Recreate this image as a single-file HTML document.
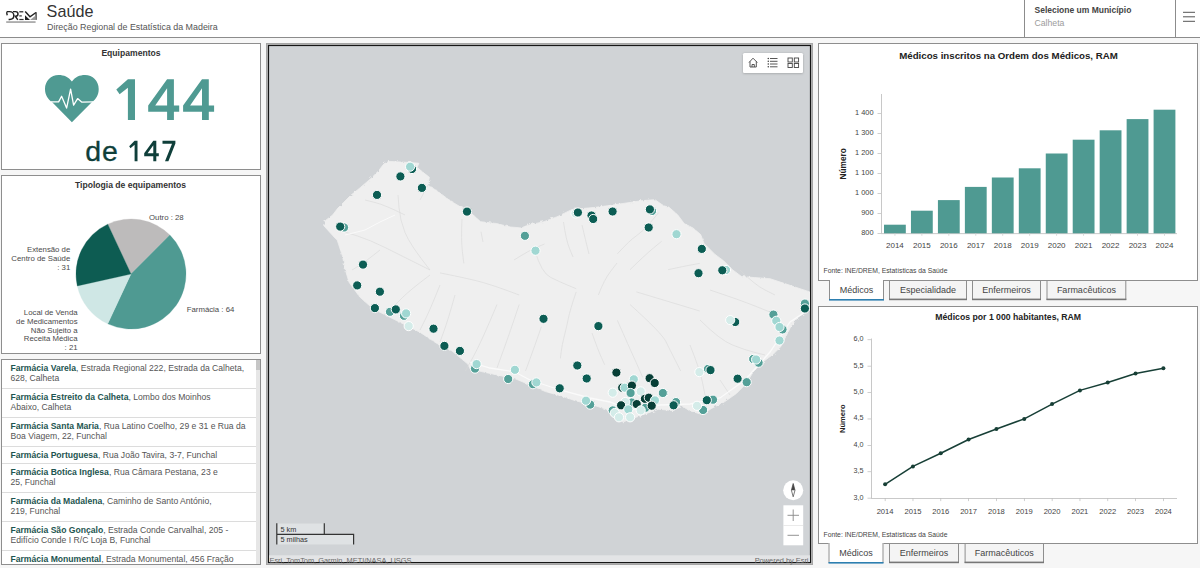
<!DOCTYPE html>
<html><head><meta charset="utf-8">
<style>
*{margin:0;padding:0;box-sizing:border-box}
html,body{width:1200px;height:568px;overflow:hidden;background:#f6f6f6;font-family:"Liberation Sans",sans-serif}
.a{position:absolute}
svg{position:absolute;left:0;top:0}
text{font-family:"Liberation Sans",sans-serif}
</style></head><body>
<svg width="1200" height="568" viewBox="0 0 1200 568">

<rect x="0" y="0" width="1200" height="37" fill="#fff"/>
<rect x="0" y="37" width="1200" height="1" fill="#8c8c8c"/>
<rect x="0" y="38" width="1200" height="5" fill="#f7f7f7"/>
<g fill="none" stroke="#222" stroke-width="1.45"><path d="M6.6,11.6 H9.6 C12,11.6 13.8,13.4 13.8,15.6 C13.8,17.9 12,19.5 9.6,19.5 H8.6"/><path d="M6.9,12.2 C6.6,13.6 6.9,14.7 7.4,15.3"/><path d="M12.9,11.6 H15.6 C17.2,11.6 18,12.6 18,13.9 C18,15.1 17.1,16.1 15.6,16.1 H15.3 L17.8,19.8"/><path d="M25.2,11.6 L30,16.8 L36,12.5"/></g><rect x="19.3" y="11.2" width="4" height="1.2" fill="#222"/><rect x="19.3" y="15.3" width="2.5" height="1.2" fill="#333"/><rect x="19.3" y="18.9" width="4.3" height="1.2" fill="#333"/><rect x="35.4" y="12.2" width="1.3" height="7.7" fill="#333"/><path d="M25,15.3 L25,19.9 L30,19.9 Z" fill="#222"/><path d="M30,19.9 L35.4,15.8 L35.4,19.9 Z" fill="#999"/><rect x="6.2" y="21.4" width="29.4" height="1.3" fill="#8a8a8a"/>
<text x="46.6" y="16.7" font-size="16.2" fill="#333">Saúde</text>
<text x="47" y="29.5" font-size="8.9" fill="#555">Direção Regional de Estatística da Madeira</text>
<rect x="1024" y="0" width="1" height="37" fill="#8c8c8c"/>
<rect x="1175" y="0" width="1" height="37" fill="#8c8c8c"/>
<text x="1034.5" y="12.8" font-size="8.5" font-weight="bold" fill="#444">Selecione um Município</text>
<text x="1034.5" y="26" font-size="8.7" fill="#9c9c9c">Calheta</text>
<rect x="1183" y="11.8" width="12" height="1" fill="#555"/>
<rect x="1183" y="16.3" width="12" height="1" fill="#555"/>
<rect x="1183" y="20.8" width="12" height="1" fill="#555"/>
<rect x="1.5" y="43.5" width="259" height="126" fill="#fff" stroke="#8e8e8e" stroke-width="1"/>
<rect x="1.5" y="175.5" width="259" height="178" fill="#fff" stroke="#8e8e8e" stroke-width="1"/>
<rect x="1.5" y="359.5" width="259" height="205" fill="#fff" stroke="#8e8e8e" stroke-width="1"/>
<text x="131" y="55.9" font-size="8.6" font-weight="bold" fill="#333" text-anchor="middle">Equipamentos</text>
<path d="M71.9,81.5 C68.5,77 64,75 58.6,75 C51,75 45,81 45,89 C45,95 48,99.5 52,102 L71.9,122.2 L92,102 C96,99.5 98.7,95 98.7,89 C98.7,81 92.7,75 85,75 C79.5,75 75.3,77 71.9,81.5 Z" fill="#4f9a92"/>
<polyline points="51,101.9 58.6,101.9 61.6,96.3 66.6,108.1 70.6,89.1 73.6,105.1 77.6,98.6 81.6,102.1 93,101.9" fill="none" stroke="#fff" stroke-width="1.3" stroke-linejoin="round"/>
<path fill-rule="evenodd" fill="#4f9a92" d="M127.9,79.3 L135,79.3 L135,119.9 L127.9,119.9 L127.9,87.8 L119.6,94.2 L116.3,89.4 Z M167.1,79.3 L173.9,79.3 L173.9,105.4 L179.2,105.4 L179.2,111.7 L173.9,111.7 L173.9,119.9 L167.1,119.9 L167.1,111.7 L148.2,111.7 L148.2,105.4 Z M167.1,88.2 L167.1,105.4 L155.2,105.4 Z M202.0,79.3 L208.8,79.3 L208.8,105.4 L214.1,105.4 L214.1,111.7 L208.8,111.7 L208.8,119.9 L202.0,119.9 L202.0,111.7 L183.1,111.7 L183.1,105.4 Z M202.0,88.2 L202.0,105.4 L190.1,105.4 Z"/>
<text x="85.2" y="161.2" font-size="28.5" letter-spacing="1" fill="#0f3f3a" stroke="#0f3f3a" stroke-width="0.3">de</text>
<path fill-rule="evenodd" fill="#0f3f3a" d="M134.6,140.8 L137.5,140.8 L137.5,161.2 L134.6,161.2 L134.6,144.8 L130.5,148.3 L129.2,146.2 Z M153.3,140.8 L156.3,140.8 L156.3,153.3 L158.8,153.3 L158.8,156.2 L156.3,156.2 L156.3,161.2 L153.3,161.2 L153.3,156.2 L144.2,156.2 L144.2,153.3 Z M153.3,145.3 L153.3,153.3 L147.6,153.3 Z M162.5,140.8 L175.4,140.8 L175.4,143.6 L168.4,161.2 L165,161.2 L172,143.7 L162.5,143.7 Z"/>
<text x="130.5" y="188" font-size="8.6" font-weight="bold" fill="#333" text-anchor="middle">Tipologia de equipamentos</text>
<path d="M131,274 L107.76,224.15 A55,55 0 0 1 169.89,235.11 Z" fill="#bdbbbb" stroke="#bdbbbb" stroke-width="0.3"/>
<path d="M131,274 L169.89,235.11 A55,55 0 0 1 107.76,323.85 Z" fill="#4f9a92" stroke="#4f9a92" stroke-width="0.3"/>
<path d="M131,274 L107.76,323.85 A55,55 0 0 1 77.30,285.90 Z" fill="#cfe7e5" stroke="#cfe7e5" stroke-width="0.3"/>
<path d="M131,274 L77.30,285.90 A55,55 0 0 1 107.76,224.15 Z" fill="#0d5c52" stroke="#0d5c52" stroke-width="0.3"/>
<text x="149" y="219.5" font-size="7.8" fill="#4a4a4a" text-anchor="start">Outro : 28</text>
<text x="70.3" y="252" font-size="7.8" fill="#4a4a4a" text-anchor="end">Extensão de</text>
<text x="70.3" y="261" font-size="7.8" fill="#4a4a4a" text-anchor="end">Centro de Saúde</text>
<text x="70.3" y="270" font-size="7.8" fill="#4a4a4a" text-anchor="end">: 31</text>
<text x="77.6" y="315" font-size="7.8" fill="#4a4a4a" text-anchor="end">Local de Venda</text>
<text x="77.6" y="323.8" font-size="7.8" fill="#4a4a4a" text-anchor="end">de Medicamentos</text>
<text x="77.6" y="332.6" font-size="7.8" fill="#4a4a4a" text-anchor="end">Não Sujeito a</text>
<text x="77.6" y="341.4" font-size="7.8" fill="#4a4a4a" text-anchor="end">Receita Médica</text>
<text x="77.6" y="350.2" font-size="7.8" fill="#4a4a4a" text-anchor="end">: 21</text>
<text x="186.7" y="311.5" font-size="7.8" fill="#4a4a4a" text-anchor="start">Farmácia : 64</text>
<rect x="256" y="360" width="4" height="204" fill="#e6e6e6"/>
<rect x="256" y="360" width="4" height="10" fill="#c6c6c6"/>
<text x="10.5" y="370.8" font-size="8.6" fill="#555"><tspan font-weight="bold" fill="#1d5550">Farmácia Varela</tspan>, Estrada Regional 222, Estrada da Calheta,</text>
<text x="10.5" y="381.40000000000003" font-size="8.6" fill="#555">628, Calheta</text>
<rect x="2" y="388" width="254" height="1" fill="#dcdcdc"/>
<text x="10.5" y="399.8" font-size="8.6" fill="#555"><tspan font-weight="bold" fill="#1d5550">Farmácia Estreito da Calheta</tspan>, Lombo dos Moinhos</text>
<text x="10.5" y="410.40000000000003" font-size="8.6" fill="#555">Abaixo, Calheta</text>
<rect x="2" y="417" width="254" height="1" fill="#dcdcdc"/>
<text x="10.5" y="428.8" font-size="8.6" fill="#555"><tspan font-weight="bold" fill="#1d5550">Farmácia Santa Maria</tspan>, Rua Latino Coelho, 29 e 31 e Rua da</text>
<text x="10.5" y="439.40000000000003" font-size="8.6" fill="#555">Boa Viagem, 22, Funchal</text>
<rect x="2" y="446" width="254" height="1" fill="#dcdcdc"/>
<text x="10.5" y="457.8" font-size="8.6" fill="#555"><tspan font-weight="bold" fill="#1d5550">Farmácia Portuguesa</tspan>, Rua João Tavira, 3-7, Funchal</text>
<rect x="2" y="463" width="254" height="1" fill="#dcdcdc"/>
<text x="10.5" y="474.8" font-size="8.6" fill="#555"><tspan font-weight="bold" fill="#1d5550">Farmácia Botica Inglesa</tspan>, Rua Câmara Pestana, 23 e</text>
<text x="10.5" y="485.40000000000003" font-size="8.6" fill="#555">25, Funchal</text>
<rect x="2" y="492" width="254" height="1" fill="#dcdcdc"/>
<text x="10.5" y="503.8" font-size="8.6" fill="#555"><tspan font-weight="bold" fill="#1d5550">Farmácia da Madalena</tspan>, Caminho de Santo António,</text>
<text x="10.5" y="514.4" font-size="8.6" fill="#555">219, Funchal</text>
<rect x="2" y="521" width="254" height="1" fill="#dcdcdc"/>
<text x="10.5" y="532.8" font-size="8.6" fill="#555"><tspan font-weight="bold" fill="#1d5550">Farmácia São Gonçalo</tspan>, Estrada Conde Carvalhal, 205 -</text>
<text x="10.5" y="543.4" font-size="8.6" fill="#555">Edifício Conde I R/C Loja B, Funchal</text>
<rect x="2" y="550" width="254" height="1" fill="#dcdcdc"/>
<text x="10.5" y="561.8" font-size="8.6" fill="#555"><tspan font-weight="bold" fill="#1d5550">Farmácia Monumental</tspan>, Estrada Monumental, 456 Fração</text>
<rect x="266.5" y="43.5" width="546" height="521" fill="#bdbdbd" stroke="#a5a5a5"/>
<rect x="268.5" y="45.5" width="542" height="517" fill="#d0d3d6" stroke="#151515" stroke-width="1.2"/>
<clipPath id="mc"><rect x="269" y="46" width="541" height="516"/></clipPath>
<g clip-path="url(#mc)">
<filter id="rough" x="-5%" y="-5%" width="110%" height="110%"><feTurbulence type="fractalNoise" baseFrequency="0.35" numOctaves="2" seed="3"/><feDisplacementMap in="SourceGraphic" scale="3"/></filter>
<polygon points="323.8,223.9 325.6,220.4 332.6,215.1 337.9,208.1 343.2,202.8 350.2,195.8 359,188.7 371.3,178.2 378.4,171.1 383.7,164.1 388.9,161.4 406.5,162.3 418.9,163.2 417.1,167.6 425.9,174.6 429.4,177.3 427.7,185.2 436.5,190.5 450.6,201.1 459.4,206.3 468.2,209.9 472,214 480.6,221.7 496.4,223.5 510.5,227 521,227.9 528.1,225.2 543.9,221.7 558,216.4 572.1,209.4 593.2,207.6 607.3,205.8 624.9,203.2 642.5,200.6 654.9,199.7 663.7,205.8 668.8,207.1 677.6,214.8 684.2,223.6 693,228 700.7,234.6 704,243.4 715,254.4 723.8,261 732.7,269.9 741.5,276.5 754.7,277.6 770,278.7 783.3,283.1 796.5,287.5 809.7,291.9 811,292 811,310 807.9,311 798,317.1 790.6,327 785.7,336.8 780.7,346.7 773.4,354.1 763.5,361.5 753.6,371.3 746.2,383.6 736.4,393.5 724.1,402.1 711.8,408.3 701.9,414.4 689.6,410.7 682.5,406.3 672.7,410.6 658.6,409.2 638.9,416.2 623.4,421.8 616.3,420.4 606.5,409.2 593.6,405.3 575.3,400.7 561.6,396.1 545.5,391.6 529.5,384.7 515.8,379 499.8,375.5 483.7,372.1 470,368.7 467.9,364.1 452,350.9 436.2,343 420.3,332.4 404.5,324.5 388.6,316.6 372.8,308.6 359.6,296.8 349,282.2 345.1,269 342.4,255.8 337.2,240 335,238 323.8,225.7" fill="#efefef" stroke="#efefef" stroke-width="0.8" filter="url(#rough)"/>
<path d="M462,219 Q461,240 462.4,251.7 L463.8,263.4" fill="none" stroke="#d9d9d9" stroke-width="0.6"/>
<path d="M481,231.7 L483,242" fill="none" stroke="#d9d9d9" stroke-width="0.6"/>
<path d="M514,260 Q530,250 537.25,247.0 L544.5,244" fill="none" stroke="#d9d9d9" stroke-width="0.6"/>
<path d="M535,250.7 Q541.4,272.9 550.7,277.45 Q560,282 568.1,285.35 L576.2,288.7" fill="none" stroke="#d9d9d9" stroke-width="0.6"/>
<path d="M563.5,222 Q566,240 569.5,248.5 L573,257" fill="none" stroke="#d9d9d9" stroke-width="0.6"/>
<path d="M582,225 Q586,242 587.5,248.0 L589,254" fill="none" stroke="#d9d9d9" stroke-width="0.6"/>
<path d="M617.4,253.8 Q630,240 636.35,235.85 Q642.7,231.7 650.6500000000001,222.2 L658.6,212.7" fill="none" stroke="#d9d9d9" stroke-width="0.6"/>
<path d="M630,269.7 Q645,255 653.35,248.1 L661.7,241.2" fill="none" stroke="#d9d9d9" stroke-width="0.6"/>
<path d="M668,269.7 Q685,266 692.35,264.7 L699.7,263.4" fill="none" stroke="#d9d9d9" stroke-width="0.6"/>
<path d="M440,272.9 Q471.7,279.2 483.35,282.6 Q495,286 507.1,290.5 L519.2,295" fill="none" stroke="#d9d9d9" stroke-width="0.6"/>
<path d="M598.4,295 Q604,280 610.5,271.5 L617,263" fill="none" stroke="#d9d9d9" stroke-width="0.6"/>
<path d="M576.2,291.9 Q570,310 568.35,318.35 Q566.7,326.7 564.35,335.85 Q562,345 561.2,351.7 L560.4,358.4" fill="none" stroke="#d9d9d9" stroke-width="0.6"/>
<path d="M592,333 Q598,350 601.35,357.35 L604.7,364.7" fill="none" stroke="#d9d9d9" stroke-width="0.6"/>
<path d="M617.4,320.4 Q630,349 633.0,355.5 Q636,362 639.35,369.7 L642.7,377.4" fill="none" stroke="#d9d9d9" stroke-width="0.6"/>
<path d="M630,304.5 Q661.7,333 665.85,341.5 Q670,350 675.35,360.5 L680.7,371" fill="none" stroke="#d9d9d9" stroke-width="0.6"/>
<path d="M636.4,291.9 Q668,301.4 683.85,306.2 L699.7,311" fill="none" stroke="#d9d9d9" stroke-width="0.6"/>
<path d="M497,304.5 Q481.2,342.5 473.25,356.75 L465.3,371" fill="none" stroke="#d9d9d9" stroke-width="0.6"/>
<path d="M519.2,304.5 Q509.7,333 503.35,350.45 L497,367.9" fill="none" stroke="#d9d9d9" stroke-width="0.6"/>
<path d="M541.4,326.7 Q534,348 529.75,359.5 L525.5,371" fill="none" stroke="#d9d9d9" stroke-width="0.6"/>
<path d="M430,270 Q410,245 405.0,232.5 Q400,220 399.0,207.5 L398,195" fill="none" stroke="#d9d9d9" stroke-width="0.6"/>
<path d="M430,270 Q400,255 385.0,247.5 Q370,240 357.5,236.0 L345,232" fill="none" stroke="#d9d9d9" stroke-width="0.6"/>
<path d="M430,275 Q410,290 402.5,297.5 L395,305" fill="none" stroke="#d9d9d9" stroke-width="0.6"/>
<path d="M440,285 Q430,310 425.0,320.0 L420,330" fill="none" stroke="#d9d9d9" stroke-width="0.6"/>
<path d="M455,295 Q448,320 444.0,331.0 L440,342" fill="none" stroke="#d9d9d9" stroke-width="0.6"/>
<path d="M380,250 Q365,262 358.5,266.0 L352,270" fill="none" stroke="#d9d9d9" stroke-width="0.6"/>
<path d="M405,215 Q385,205 375.0,202.5 L365,200" fill="none" stroke="#d9d9d9" stroke-width="0.6"/>
<path d="M420,200 L428,185" fill="none" stroke="#d9d9d9" stroke-width="0.6"/>
<path d="M700,320 Q720,340 732.5,345.0 Q745,350 755.0,352.5 L765,355" fill="none" stroke="#d9d9d9" stroke-width="0.6"/>
<path d="M710,290 Q740,300 755.0,306.0 L770,312" fill="none" stroke="#d9d9d9" stroke-width="0.6"/>
<path d="M690,345 Q700,370 702.5,382.5 L705,395" fill="none" stroke="#d9d9d9" stroke-width="0.6"/>
<path d="M720,380 L730,395" fill="none" stroke="#d9d9d9" stroke-width="0.6"/>
<path d="M740,270 Q755,285 765.0,290.0 L775,295" fill="none" stroke="#d9d9d9" stroke-width="0.6"/>
<polyline points="470,362 490,368 515,372 530,380 560,390 590,398 610,402 630,410 660,405 690,404 720,398 745,380 770,352 790,322 811,308" fill="none" stroke="#fafafa" stroke-width="1.3"/>
<polyline points="345,235 365,230 380,222 395,215" fill="none" stroke="#fafafa" stroke-width="1"/>
<circle cx="412" cy="169" r="4.6" fill="#0c5d54" stroke="#fff" stroke-width="1"/>
<circle cx="410.1" cy="166.7" r="4.6" fill="#a0d7d2" stroke="#fff" stroke-width="1"/>
<circle cx="400.4" cy="176.4" r="4.6" fill="#0c5d54" stroke="#fff" stroke-width="1"/>
<circle cx="377" cy="194.9" r="4.6" fill="#0c5d54" stroke="#fff" stroke-width="1"/>
<circle cx="421.9" cy="187.9" r="4.6" fill="#0c5d54" stroke="#fff" stroke-width="1"/>
<circle cx="467" cy="211.6" r="4.6" fill="#0c5d54" stroke="#fff" stroke-width="1"/>
<circle cx="344" cy="227.5" r="4.6" fill="#54a098" stroke="#fff" stroke-width="1"/>
<circle cx="340.2" cy="226.6" r="4.6" fill="#0c5d54" stroke="#fff" stroke-width="1"/>
<circle cx="363" cy="264.6" r="4.6" fill="#0c5d54" stroke="#fff" stroke-width="1"/>
<circle cx="357.2" cy="285.4" r="4.6" fill="#0c5d54" stroke="#fff" stroke-width="1"/>
<circle cx="379.9" cy="291.7" r="4.6" fill="#0c5d54" stroke="#fff" stroke-width="1"/>
<circle cx="374.9" cy="308.1" r="4.6" fill="#0c5d54" stroke="#fff" stroke-width="1"/>
<circle cx="390" cy="311.8" r="4.6" fill="#54a098" stroke="#fff" stroke-width="1"/>
<circle cx="395.8" cy="309.4" r="4.6" fill="#0c5d54" stroke="#fff" stroke-width="1"/>
<circle cx="404" cy="315.8" r="4.6" fill="#54a098" stroke="#fff" stroke-width="1"/>
<circle cx="406.1" cy="313.4" r="4.6" fill="#a0d7d2" stroke="#fff" stroke-width="1"/>
<circle cx="408.7" cy="326.1" r="4.6" fill="#d4ece9" stroke="#fff" stroke-width="1"/>
<circle cx="433.5" cy="328.7" r="4.6" fill="#0c5d54" stroke="#fff" stroke-width="1"/>
<circle cx="444.4" cy="345.9" r="4.6" fill="#0c5d54" stroke="#fff" stroke-width="1"/>
<circle cx="459.9" cy="350.9" r="4.6" fill="#0c5d54" stroke="#fff" stroke-width="1"/>
<circle cx="475" cy="368.6" r="4.6" fill="#54a098" stroke="#fff" stroke-width="1"/>
<circle cx="476.6" cy="364.1" r="4.6" fill="#a0d7d2" stroke="#fff" stroke-width="1"/>
<circle cx="543.5" cy="318.8" r="4.6" fill="#0c5d54" stroke="#fff" stroke-width="1"/>
<circle cx="598.4" cy="326.1" r="4.6" fill="#0c5d54" stroke="#fff" stroke-width="1"/>
<circle cx="514.9" cy="369.8" r="4.6" fill="#a0d7d2" stroke="#fff" stroke-width="1"/>
<circle cx="508.2" cy="379" r="4.6" fill="#54a098" stroke="#fff" stroke-width="1"/>
<circle cx="532.9" cy="384.2" r="4.6" fill="#54a098" stroke="#fff" stroke-width="1"/>
<circle cx="536.4" cy="382.4" r="4.6" fill="#a0d7d2" stroke="#fff" stroke-width="1"/>
<circle cx="559.7" cy="388.3" r="4.6" fill="#0c5d54" stroke="#fff" stroke-width="1"/>
<circle cx="577.3" cy="365.5" r="4.6" fill="#0c5d54" stroke="#fff" stroke-width="1"/>
<circle cx="586.7" cy="378.5" r="4.6" fill="#0c5d54" stroke="#fff" stroke-width="1"/>
<circle cx="590.2" cy="404.6" r="4.6" fill="#54a098" stroke="#fff" stroke-width="1"/>
<circle cx="586" cy="400.7" r="4.6" fill="#a0d7d2" stroke="#fff" stroke-width="1"/>
<circle cx="524.9" cy="235.8" r="4.6" fill="#54a098" stroke="#fff" stroke-width="1"/>
<circle cx="535.5" cy="250.7" r="4.6" fill="#a0d7d2" stroke="#fff" stroke-width="1"/>
<circle cx="575.5" cy="213.5" r="4.6" fill="#d4ece9" stroke="#fff" stroke-width="1"/>
<circle cx="577.9" cy="212.5" r="4.6" fill="#0c5d54" stroke="#fff" stroke-width="1"/>
<circle cx="591.5" cy="215.5" r="4.6" fill="#0c5d54" stroke="#fff" stroke-width="1"/>
<circle cx="593.2" cy="219" r="4.6" fill="#0c5d54" stroke="#fff" stroke-width="1"/>
<circle cx="612.6" cy="211.5" r="4.6" fill="#0c5d54" stroke="#fff" stroke-width="1"/>
<circle cx="652" cy="211" r="4.6" fill="#54a098" stroke="#fff" stroke-width="1"/>
<circle cx="649.9" cy="209.4" r="4.6" fill="#0c5d54" stroke="#fff" stroke-width="1"/>
<circle cx="648.7" cy="227.5" r="4.6" fill="#0c5d54" stroke="#fff" stroke-width="1"/>
<circle cx="676.5" cy="234.2" r="4.6" fill="#a0d7d2" stroke="#fff" stroke-width="1"/>
<circle cx="701.8" cy="248.9" r="4.6" fill="#0c5d54" stroke="#fff" stroke-width="1"/>
<circle cx="698.5" cy="273.2" r="4.6" fill="#0c5d54" stroke="#fff" stroke-width="1"/>
<circle cx="726" cy="270" r="4.6" fill="#a0d7d2" stroke="#fff" stroke-width="1"/>
<circle cx="722.3" cy="270.3" r="4.6" fill="#0c5d54" stroke="#fff" stroke-width="1"/>
<circle cx="804.9" cy="303.6" r="4.6" fill="#54a098" stroke="#fff" stroke-width="1"/>
<circle cx="804.9" cy="308.5" r="4.6" fill="#0c5d54" stroke="#fff" stroke-width="1"/>
<circle cx="735.2" cy="322" r="4.6" fill="#0c5d54" stroke="#fff" stroke-width="1"/>
<circle cx="730.2" cy="320.1" r="4.6" fill="#d4ece9" stroke="#fff" stroke-width="1"/>
<circle cx="773.4" cy="314.6" r="4.6" fill="#54a098" stroke="#fff" stroke-width="1"/>
<circle cx="782.5" cy="329.4" r="4.6" fill="#54a098" stroke="#fff" stroke-width="1"/>
<circle cx="776.3" cy="320.8" r="4.6" fill="#a0d7d2" stroke="#fff" stroke-width="1"/>
<circle cx="779.5" cy="327" r="4.6" fill="#a0d7d2" stroke="#fff" stroke-width="1"/>
<circle cx="779.5" cy="340.5" r="4.6" fill="#a0d7d2" stroke="#fff" stroke-width="1"/>
<circle cx="753.2" cy="359" r="4.6" fill="#54a098" stroke="#fff" stroke-width="1"/>
<circle cx="758.6" cy="362.7" r="4.6" fill="#54a098" stroke="#fff" stroke-width="1"/>
<circle cx="756.1" cy="359.5" r="4.6" fill="#a0d7d2" stroke="#fff" stroke-width="1"/>
<circle cx="699.4" cy="372.1" r="4.6" fill="#d4ece9" stroke="#fff" stroke-width="1"/>
<circle cx="708" cy="368.9" r="4.6" fill="#54a098" stroke="#fff" stroke-width="1"/>
<circle cx="710.5" cy="370.1" r="4.6" fill="#0c5d54" stroke="#fff" stroke-width="1"/>
<circle cx="737.6" cy="378.7" r="4.6" fill="#0c5d54" stroke="#fff" stroke-width="1"/>
<circle cx="746.7" cy="382.2" r="4.6" fill="#54a098" stroke="#fff" stroke-width="1"/>
<circle cx="713" cy="399.7" r="4.6" fill="#54a098" stroke="#fff" stroke-width="1"/>
<circle cx="706.8" cy="400.2" r="4.6" fill="#0c5d54" stroke="#fff" stroke-width="1"/>
<circle cx="703.1" cy="410" r="4.6" fill="#54a098" stroke="#fff" stroke-width="1"/>
<circle cx="697" cy="405.8" r="4.6" fill="#d4ece9" stroke="#fff" stroke-width="1"/>
<circle cx="663.7" cy="393" r="4.6" fill="#54a098" stroke="#fff" stroke-width="1"/>
<circle cx="676" cy="402.1" r="4.6" fill="#54a098" stroke="#fff" stroke-width="1"/>
<circle cx="673.6" cy="405.3" r="4.6" fill="#0c5d54" stroke="#fff" stroke-width="1"/>
<circle cx="616.4" cy="372.6" r="4.6" fill="#073e36" stroke="#fff" stroke-width="1"/>
<circle cx="633.8" cy="379.3" r="4.6" fill="#a0d7d2" stroke="#fff" stroke-width="1"/>
<circle cx="622.2" cy="387.7" r="4.6" fill="#073e36" stroke="#fff" stroke-width="1"/>
<circle cx="624.8" cy="387.7" r="4.6" fill="#a0d7d2" stroke="#fff" stroke-width="1"/>
<circle cx="631.9" cy="385.6" r="4.6" fill="#073e36" stroke="#fff" stroke-width="1"/>
<circle cx="630.6" cy="393" r="4.6" fill="#54a098" stroke="#fff" stroke-width="1"/>
<circle cx="612.7" cy="392.7" r="4.6" fill="#d4ece9" stroke="#fff" stroke-width="1"/>
<circle cx="640.7" cy="391.4" r="4.6" fill="#d4ece9" stroke="#fff" stroke-width="1"/>
<circle cx="649.6" cy="378.2" r="4.6" fill="#073e36" stroke="#fff" stroke-width="1"/>
<circle cx="654.7" cy="383" r="4.6" fill="#073e36" stroke="#fff" stroke-width="1"/>
<circle cx="662.8" cy="393" r="4.6" fill="#54a098" stroke="#fff" stroke-width="1"/>
<circle cx="631.7" cy="402.5" r="4.6" fill="#54a098" stroke="#fff" stroke-width="1"/>
<circle cx="645.4" cy="407.8" r="4.6" fill="#54a098" stroke="#fff" stroke-width="1"/>
<circle cx="625.3" cy="402" r="4.6" fill="#d4ece9" stroke="#fff" stroke-width="1"/>
<circle cx="644.9" cy="398.8" r="4.6" fill="#073e36" stroke="#fff" stroke-width="1"/>
<circle cx="648.8" cy="397.7" r="4.6" fill="#073e36" stroke="#fff" stroke-width="1"/>
<circle cx="654.9" cy="400.4" r="4.6" fill="#a0d7d2" stroke="#fff" stroke-width="1"/>
<circle cx="651.7" cy="405.7" r="4.6" fill="#073e36" stroke="#fff" stroke-width="1"/>
<circle cx="636.7" cy="404.1" r="4.6" fill="#073e36" stroke="#fff" stroke-width="1"/>
<circle cx="621.1" cy="405.3" r="4.6" fill="#073e36" stroke="#fff" stroke-width="1"/>
<circle cx="628.3" cy="409.4" r="4.6" fill="#a0d7d2" stroke="#fff" stroke-width="1"/>
<circle cx="640.7" cy="410.4" r="4.6" fill="#d4ece9" stroke="#fff" stroke-width="1"/>
<circle cx="612.7" cy="410.4" r="4.6" fill="#54a098" stroke="#fff" stroke-width="1"/>
<circle cx="614.8" cy="413" r="4.6" fill="#d4ece9" stroke="#fff" stroke-width="1"/>
<circle cx="619" cy="417.3" r="4.6" fill="#d4ece9" stroke="#fff" stroke-width="1"/>
<circle cx="630.1" cy="417.3" r="4.6" fill="#d4ece9" stroke="#fff" stroke-width="1"/>
</g>
<rect x="743" y="53" width="60" height="20" rx="1.5" fill="#fff" filter="url(#sh)"/>
<g fill="none" stroke="#444" stroke-width="0.9"><path d="M749,62.5 L753,58.2 L757.3,62.5 M750,61.5 V67 H756.3 V61.5 M752,67 V64.5 H754.3 V67"/><path d="M770,58.5 H777.5 M770,61.3 H777.5 M770,64 H777.5 M770,66.8 H777.5"/><rect x="788" y="58" width="4.3" height="4" /><rect x="794.3" y="58" width="4.3" height="4"/><rect x="788" y="63.5" width="4.3" height="4" /><rect x="794.3" y="63.5" width="4.3" height="4"/></g><g fill="#444"><circle cx="768.3" cy="58.5" r="0.8"/><circle cx="768.3" cy="61.3" r="0.8"/><circle cx="768.3" cy="64" r="0.8"/><circle cx="768.3" cy="66.8" r="0.8"/></g>
<circle cx="793.2" cy="490.2" r="10" fill="#fff"/>
<path d="M793.2,483.5 L795,490.2 L793.2,496.8 L791.4,490.2 Z" fill="none" stroke="#555" stroke-width="0.8"/><path d="M793.2,483.5 L795,490.2 L791.4,490.2 Z" fill="#444"/>
<rect x="783.4" y="505.3" width="19.8" height="40" fill="#fff"/>
<rect x="783.4" y="525.2" width="19.8" height="0.6" fill="#ddd"/>
<path d="M787.5,515.3 H799 M793.2,509.5 V521" stroke="#888" stroke-width="0.9"/>
<path d="M787.5,535.3 H799" stroke="#888" stroke-width="0.9"/>
<rect x="276.5" y="523.5" width="48" height="11" fill="#e2e4e6" opacity="0.85"/>
<rect x="276.5" y="534.5" width="77" height="10" fill="#e2e4e6" opacity="0.85"/>
<path d="M276.8,523.3 V544.6 M276.8,534.4 H353.6 V544.6 M324.3,523.3 V534.4" fill="none" stroke="#333" stroke-width="1.2"/>
<text x="280.5" y="531.6" font-size="7.3" fill="#333">5 km</text>
<text x="280.5" y="541.6" font-size="7.3" fill="#333">5 milhas</text>
<rect x="269" y="555.3" width="541" height="6.7" fill="#e4e6e8" opacity="0.9"/>
<text x="269.5" y="562.5" font-size="7.4" fill="#6a6a6a">Esri, TomTom, Garmin, METI/NASA, USGS</text>
<text x="808.5" y="562.5" font-size="7.4" fill="#6a6a6a" text-anchor="end">Powered by Esri</text>
<rect x="818.5" y="43.5" width="379" height="237" fill="#fff" stroke="#8e8e8e" stroke-width="1"/>
<rect x="818.5" y="306.5" width="379" height="237" fill="#fff" stroke="#8e8e8e" stroke-width="1"/>
<rect x="829" y="279" width="55" height="21" fill="#fff"/>
<path d="M829.5,280 V300 M883.5,280 V300" stroke="#8e8e8e" stroke-width="1"/>
<rect x="829" y="299" width="55" height="1.6" fill="#2d7fb0"/>
<text x="856.5" y="293.1" font-size="9" fill="#444" text-anchor="middle">Médicos</text>
<rect x="889.5" y="280.5" width="77" height="19" fill="#f4f4f4" stroke="#8e8e8e"/>
<rect x="889" y="298.6" width="78" height="1.6" fill="#777"/>
<text x="928.0" y="293.1" font-size="9" fill="#444" text-anchor="middle">Especialidade</text>
<rect x="972.5" y="280.5" width="68" height="19" fill="#f4f4f4" stroke="#8e8e8e"/>
<rect x="972" y="298.6" width="69" height="1.6" fill="#777"/>
<text x="1006.5" y="293.1" font-size="9" fill="#444" text-anchor="middle">Enfermeiros</text>
<rect x="1047.0" y="280.5" width="78.79999999999995" height="19" fill="#f4f4f4" stroke="#8e8e8e"/>
<rect x="1046.5" y="298.6" width="79.79999999999995" height="1.6" fill="#777"/>
<text x="1086.4" y="293.1" font-size="9" fill="#444" text-anchor="middle">Farmacêuticos</text>
<rect x="828.5" y="542" width="55.0" height="21" fill="#fff"/>
<path d="M829.0,543 V563 M883.0,543 V563" stroke="#8e8e8e" stroke-width="1"/>
<rect x="828.5" y="562" width="55.0" height="1.6" fill="#2d7fb0"/>
<text x="856.0" y="556.1" font-size="9" fill="#444" text-anchor="middle">Médicos</text>
<rect x="889.5" y="543.5" width="69" height="19" fill="#f4f4f4" stroke="#8e8e8e"/>
<rect x="889" y="561.6" width="70" height="1.6" fill="#777"/>
<text x="924.0" y="556.1" font-size="9" fill="#444" text-anchor="middle">Enfermeiros</text>
<rect x="965.1" y="543.5" width="78.39999999999998" height="19" fill="#f4f4f4" stroke="#8e8e8e"/>
<rect x="964.6" y="561.6" width="79.39999999999998" height="1.6" fill="#777"/>
<text x="1004.3" y="556.1" font-size="9" fill="#444" text-anchor="middle">Farmacêuticos</text>
<text x="1008.5" y="59" font-size="9.7" font-weight="bold" fill="#222" text-anchor="middle">Médicos inscritos na Ordem dos Médicos, RAM</text>
<rect x="881" y="94" width="0.8" height="139.3" fill="#bbb"/>
<rect x="881" y="233.3" width="296" height="0.8" fill="#bbb"/>
<rect x="877.5" y="233.0" width="3.5" height="0.7" fill="#bbb"/>
<text x="873.5" y="234.70000000000002" font-size="7.4" fill="#444" text-anchor="end">800</text>
<rect x="877.5" y="213.0" width="3.5" height="0.7" fill="#bbb"/>
<text x="873.5" y="214.70000000000002" font-size="7.4" fill="#444" text-anchor="end">900</text>
<rect x="877.5" y="193.0" width="3.5" height="0.7" fill="#bbb"/>
<text x="873.5" y="194.70000000000002" font-size="7.4" fill="#444" text-anchor="end">1 000</text>
<rect x="877.5" y="173.0" width="3.5" height="0.7" fill="#bbb"/>
<text x="873.5" y="174.70000000000002" font-size="7.4" fill="#444" text-anchor="end">1 100</text>
<rect x="877.5" y="153.0" width="3.5" height="0.7" fill="#bbb"/>
<text x="873.5" y="154.70000000000002" font-size="7.4" fill="#444" text-anchor="end">1 200</text>
<rect x="877.5" y="133.0" width="3.5" height="0.7" fill="#bbb"/>
<text x="873.5" y="134.70000000000002" font-size="7.4" fill="#444" text-anchor="end">1 300</text>
<rect x="877.5" y="113.00000000000001" width="3.5" height="0.7" fill="#bbb"/>
<text x="873.5" y="114.70000000000002" font-size="7.4" fill="#444" text-anchor="end">1 400</text>
<rect x="884.00" y="224.70" width="21.8" height="8.60" fill="#4f9a92"/>
<rect x="894.60" y="233.3" width="0.7" height="2.5" fill="#ccc"/>
<text x="894.90" y="248.10000000000002" font-size="8" fill="#444" text-anchor="middle">2014</text>
<rect x="910.96" y="210.70" width="21.8" height="22.60" fill="#4f9a92"/>
<rect x="921.56" y="233.3" width="0.7" height="2.5" fill="#ccc"/>
<text x="921.86" y="248.10000000000002" font-size="8" fill="#444" text-anchor="middle">2015</text>
<rect x="937.92" y="200.10" width="21.8" height="33.20" fill="#4f9a92"/>
<rect x="948.52" y="233.3" width="0.7" height="2.5" fill="#ccc"/>
<text x="948.82" y="248.10000000000002" font-size="8" fill="#444" text-anchor="middle">2016</text>
<rect x="964.88" y="186.90" width="21.8" height="46.40" fill="#4f9a92"/>
<rect x="975.48" y="233.3" width="0.7" height="2.5" fill="#ccc"/>
<text x="975.78" y="248.10000000000002" font-size="8" fill="#444" text-anchor="middle">2017</text>
<rect x="991.84" y="177.50" width="21.8" height="55.80" fill="#4f9a92"/>
<rect x="1002.44" y="233.3" width="0.7" height="2.5" fill="#ccc"/>
<text x="1002.74" y="248.10000000000002" font-size="8" fill="#444" text-anchor="middle">2018</text>
<rect x="1018.80" y="168.30" width="21.8" height="65.00" fill="#4f9a92"/>
<rect x="1029.40" y="233.3" width="0.7" height="2.5" fill="#ccc"/>
<text x="1029.70" y="248.10000000000002" font-size="8" fill="#444" text-anchor="middle">2019</text>
<rect x="1045.76" y="153.50" width="21.8" height="79.80" fill="#4f9a92"/>
<rect x="1056.36" y="233.3" width="0.7" height="2.5" fill="#ccc"/>
<text x="1056.66" y="248.10000000000002" font-size="8" fill="#444" text-anchor="middle">2020</text>
<rect x="1072.72" y="139.70" width="21.8" height="93.60" fill="#4f9a92"/>
<rect x="1083.32" y="233.3" width="0.7" height="2.5" fill="#ccc"/>
<text x="1083.62" y="248.10000000000002" font-size="8" fill="#444" text-anchor="middle">2021</text>
<rect x="1099.68" y="130.30" width="21.8" height="103.00" fill="#4f9a92"/>
<rect x="1110.28" y="233.3" width="0.7" height="2.5" fill="#ccc"/>
<text x="1110.58" y="248.10000000000002" font-size="8" fill="#444" text-anchor="middle">2022</text>
<rect x="1126.64" y="119.10" width="21.8" height="114.20" fill="#4f9a92"/>
<rect x="1137.24" y="233.3" width="0.7" height="2.5" fill="#ccc"/>
<text x="1137.54" y="248.10000000000002" font-size="8" fill="#444" text-anchor="middle">2023</text>
<rect x="1153.60" y="109.70" width="21.8" height="123.60" fill="#4f9a92"/>
<rect x="1164.20" y="233.3" width="0.7" height="2.5" fill="#ccc"/>
<text x="1164.50" y="248.10000000000002" font-size="8" fill="#444" text-anchor="middle">2024</text>
<text transform="translate(845.6,163.8) rotate(-90)" font-size="8.3" font-weight="bold" fill="#222" text-anchor="middle">Número</text>
<text x="823.5" y="273" font-size="6.8" fill="#444">Fonte: INE/DREM, Estatísticas da Saúde</text>
<text x="1008.2" y="320" font-size="8.7" font-weight="bold" fill="#222" text-anchor="middle">Médicos por 1 000 habitantes, RAM</text>
<rect x="871" y="338.5" width="0.8" height="159.60000000000002" fill="#bbb"/>
<rect x="871" y="498.1" width="306" height="0.8" fill="#bbb"/>
<rect x="867.5" y="497.80" width="3.5" height="0.7" fill="#bbb"/>
<text x="863.5" y="499.60" font-size="7.2" fill="#444" text-anchor="end">3,0</text>
<rect x="867.5" y="471.40" width="3.5" height="0.7" fill="#bbb"/>
<text x="863.5" y="473.20" font-size="7.2" fill="#444" text-anchor="end">3,5</text>
<rect x="867.5" y="445.00" width="3.5" height="0.7" fill="#bbb"/>
<text x="863.5" y="446.80" font-size="7.2" fill="#444" text-anchor="end">4,0</text>
<rect x="867.5" y="418.60" width="3.5" height="0.7" fill="#bbb"/>
<text x="863.5" y="420.40" font-size="7.2" fill="#444" text-anchor="end">4,5</text>
<rect x="867.5" y="392.20" width="3.5" height="0.7" fill="#bbb"/>
<text x="863.5" y="394.00" font-size="7.2" fill="#444" text-anchor="end">5,0</text>
<rect x="867.5" y="365.80" width="3.5" height="0.7" fill="#bbb"/>
<text x="863.5" y="367.60" font-size="7.2" fill="#444" text-anchor="end">5,5</text>
<rect x="867.5" y="339.40" width="3.5" height="0.7" fill="#bbb"/>
<text x="863.5" y="341.20" font-size="7.2" fill="#444" text-anchor="end">6,0</text>
<rect x="884.80" y="498.1" width="0.7" height="3" fill="#bbb"/>
<text x="885.10" y="513.90" font-size="7.6" fill="#444" text-anchor="middle">2014</text>
<rect x="912.63" y="498.1" width="0.7" height="3" fill="#bbb"/>
<text x="912.93" y="513.90" font-size="7.6" fill="#444" text-anchor="middle">2015</text>
<rect x="940.46" y="498.1" width="0.7" height="3" fill="#bbb"/>
<text x="940.76" y="513.90" font-size="7.6" fill="#444" text-anchor="middle">2016</text>
<rect x="968.29" y="498.1" width="0.7" height="3" fill="#bbb"/>
<text x="968.59" y="513.90" font-size="7.6" fill="#444" text-anchor="middle">2017</text>
<rect x="996.12" y="498.1" width="0.7" height="3" fill="#bbb"/>
<text x="996.42" y="513.90" font-size="7.6" fill="#444" text-anchor="middle">2018</text>
<rect x="1023.95" y="498.1" width="0.7" height="3" fill="#bbb"/>
<text x="1024.25" y="513.90" font-size="7.6" fill="#444" text-anchor="middle">2019</text>
<rect x="1051.78" y="498.1" width="0.7" height="3" fill="#bbb"/>
<text x="1052.08" y="513.90" font-size="7.6" fill="#444" text-anchor="middle">2020</text>
<rect x="1079.61" y="498.1" width="0.7" height="3" fill="#bbb"/>
<text x="1079.91" y="513.90" font-size="7.6" fill="#444" text-anchor="middle">2021</text>
<rect x="1107.44" y="498.1" width="0.7" height="3" fill="#bbb"/>
<text x="1107.74" y="513.90" font-size="7.6" fill="#444" text-anchor="middle">2022</text>
<rect x="1135.27" y="498.1" width="0.7" height="3" fill="#bbb"/>
<text x="1135.57" y="513.90" font-size="7.6" fill="#444" text-anchor="middle">2023</text>
<rect x="1163.10" y="498.1" width="0.7" height="3" fill="#bbb"/>
<text x="1163.40" y="513.90" font-size="7.6" fill="#444" text-anchor="middle">2024</text>
<polyline points="885.10,484.37 912.93,466.42 940.76,453.22 968.59,439.49 996.42,428.93 1024.25,418.90 1052.08,404.12 1079.91,390.39 1107.74,382.47 1135.57,373.49 1163.40,368.21" fill="none" stroke="#173f36" stroke-width="1.5" stroke-linejoin="round"/>
<circle cx="885.10" cy="484.37" r="2.0" fill="#173f36"/>
<circle cx="912.93" cy="466.42" r="2.0" fill="#173f36"/>
<circle cx="940.76" cy="453.22" r="2.0" fill="#173f36"/>
<circle cx="968.59" cy="439.49" r="2.0" fill="#173f36"/>
<circle cx="996.42" cy="428.93" r="2.0" fill="#173f36"/>
<circle cx="1024.25" cy="418.90" r="2.0" fill="#173f36"/>
<circle cx="1052.08" cy="404.12" r="2.0" fill="#173f36"/>
<circle cx="1079.91" cy="390.39" r="2.0" fill="#173f36"/>
<circle cx="1107.74" cy="382.47" r="2.0" fill="#173f36"/>
<circle cx="1135.57" cy="373.49" r="2.0" fill="#173f36"/>
<circle cx="1163.40" cy="368.21" r="2.0" fill="#173f36"/>
<text transform="translate(845.1,418.7) rotate(-90)" font-size="7.6" font-weight="bold" fill="#222" text-anchor="middle">Número</text>
<text x="823.5" y="536.6" font-size="6.8" fill="#444">Fonte: INE/DREM, Estatísticas da Saúde</text>
<defs><filter id="sh" x="-20%" y="-30%" width="140%" height="160%"><feDropShadow dx="0" dy="0.5" stdDeviation="0.8" flood-opacity="0.25"/></filter></defs>
</svg></body></html>
